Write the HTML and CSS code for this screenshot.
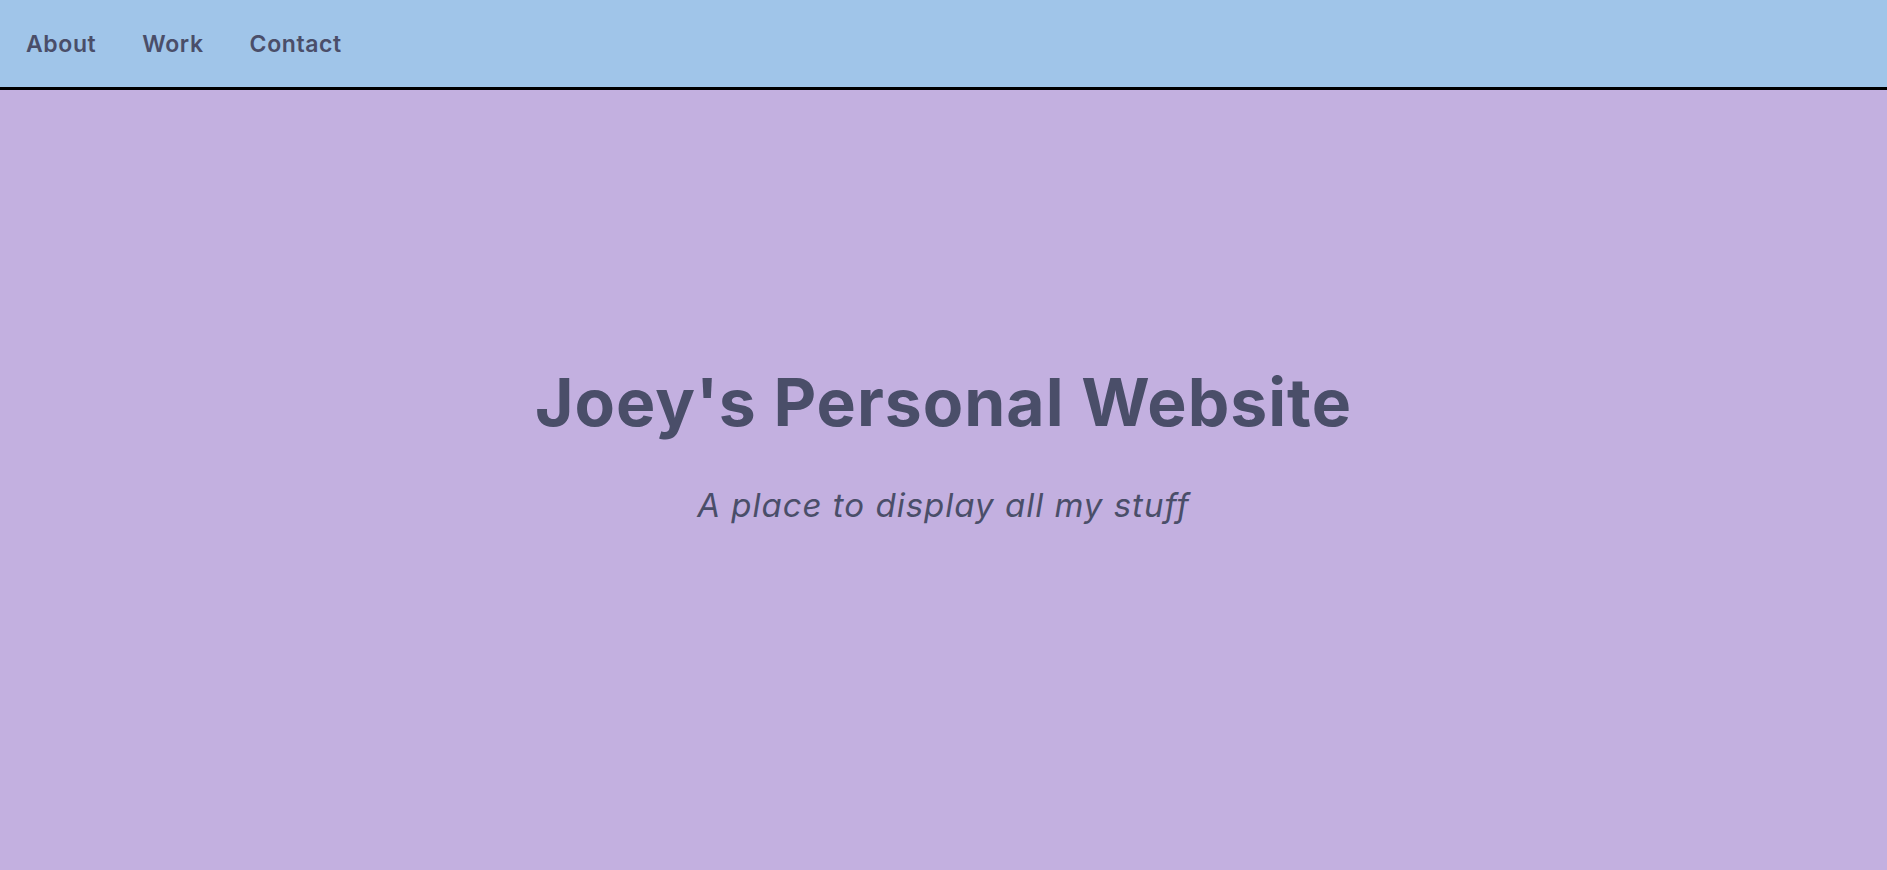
FILE: index.html
```html
<!DOCTYPE html>
<html lang="en">
<head>
    <meta charset="UTF-8">
    <meta name="viewport" content="width=device-width, initial-scale=1.0">
    <title>Joey's Personal Website</title>
    <link rel="stylesheet" href="styles.css">
</head>
<body>
    <!-- Top navigation -->
    <nav class="navbar">
        <a href="#about" class="nav-link">About</a>
        <a href="#work" class="nav-link">Work</a>
        <a href="#contact" class="nav-link">Contact</a>
    </nav>

    <!-- Hero section -->
    <main class="hero">
        <h1 class="hero-title">Joey's Personal Website</h1>
        <p class="hero-subtitle">A place to display all my stuff</p>
    </main>
</body>
</html>
```

FILE: styles.css
```css
/* General page styling */
html, body {
    height: 100%;
}

body {
    margin: 0;
    font-family: Inter, "Noto Sans", sans-serif;
    background-color: #c3b0e0; /* Lavender background */
    color: #4a4e69;
    display: flex;
    flex-direction: column;
}

/* Navigation bar */
.navbar {
    display: flex;
    align-items: center;
    gap: 46px;
    height: 87px;
    padding: 0 26px;
    background-color: #a0c5e9; /* Light blue */
    border-bottom: 3px solid #000;
}

.nav-link {
    color: #4a4e69;
    text-decoration: none;
    font-size: 23px;
    font-weight: 600;
    letter-spacing: 0.6px;
}

/* Hero section */
.hero {
    flex: 1;
    display: flex;
    flex-direction: column;
    align-items: center;
    padding-top: 272px;
}

.hero-title {
    margin: 0;
    font-size: 66px;
    font-weight: 700;
    letter-spacing: 1px;
}

.hero-subtitle {
    margin: 43px 0 0;
    font-size: 33px;
    font-style: italic;
    font-weight: 400;
    letter-spacing: 1px;
}
```
